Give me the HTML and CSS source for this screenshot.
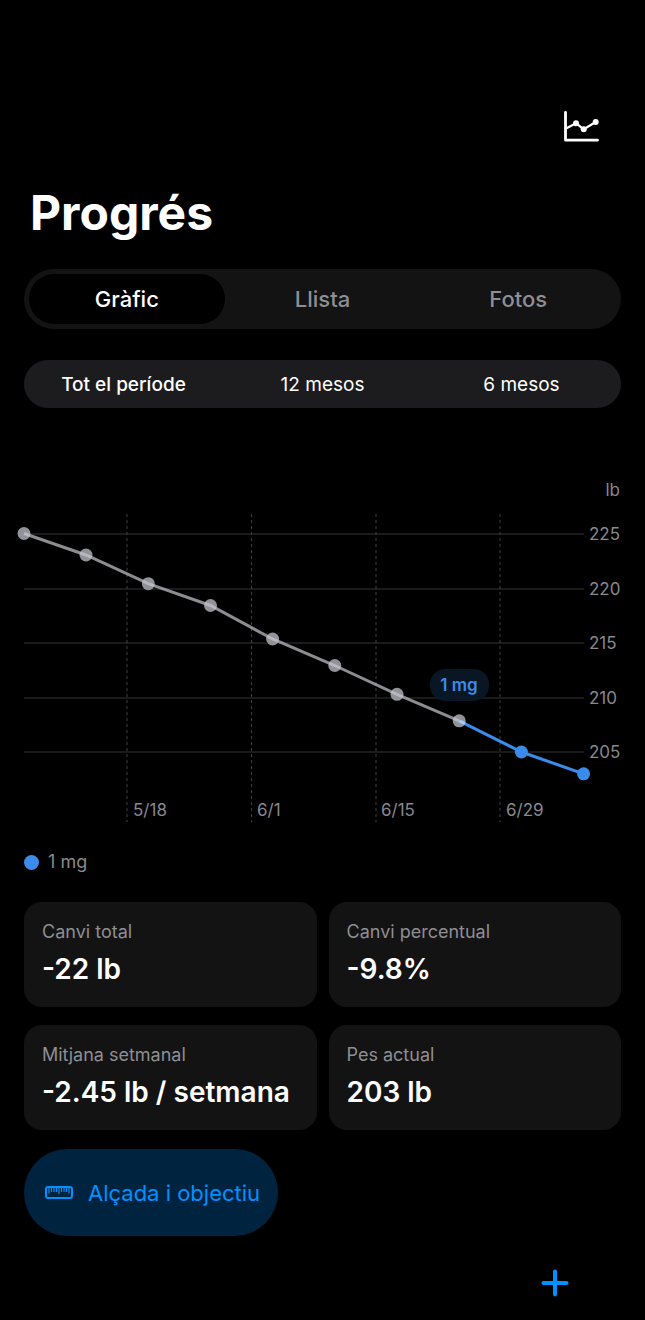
FILE: index.html
```html
<!DOCTYPE html>
<html lang="ca">
<head>
  <meta charset="utf-8">
  <meta name="viewport" content="width=device-width, initial-scale=1">
  <title>Progrés</title>
  <link rel="stylesheet" href="styles.css">
</head>
<body>

  <header class="topbar">
    <button class="icon-btn" type="button" aria-label="Gràfic">
      <svg width="38" height="34" viewBox="0 0 38 34" fill="none" stroke="#fff" stroke-linecap="round" stroke-linejoin="round">
        <path d="M2.5 2.5V30.2H34.5" stroke-width="2.8"/>
        <path d="M3 18.5L13 13.2L20.7 19.3L32.7 12" stroke-width="2.2"/>
        <g fill="#fff" stroke="none">
          <circle cx="13" cy="13.2" r="3"/>
          <circle cx="20.7" cy="19.3" r="3"/>
          <circle cx="32.7" cy="12" r="3"/>
        </g>
      </svg>
    </button>
  </header>

  <main>
    <h1>Progrés</h1>

    <nav class="tabs">
      <button class="tab active" type="button">Gràfic</button>
      <button class="tab" type="button">Llista</button>
      <button class="tab" type="button">Fotos</button>
    </nav>

    <div class="periods">
      <button class="period active" type="button">Tot el període</button>
      <button class="period" type="button">12 mesos</button>
      <button class="period" type="button">6 mesos</button>
    </div>

    <svg class="chart" viewBox="0 0 597 348">
      <g class="grid">
        <path d="M0 56H560M0 111H560M0 165H560M0 220H560M0 274H560"/>
        <path class="dashed" d="M103 36V344M227.5 36V344M352 36V344M476 36V344"/>
      </g>
      <g class="labels">
        <text x="596" y="18" text-anchor="end">lb</text>
        <text x="565" y="62">225</text>
        <text x="565" y="117">220</text>
        <text x="565" y="171">215</text>
        <text x="565" y="226">210</text>
        <text x="565" y="280">205</text>
        <text x="109" y="338">5/18</text>
        <text x="233" y="338">6/1</text>
        <text x="357" y="338">6/15</text>
        <text x="482" y="338">6/29</text>
      </g>
      <g class="dots">
        <circle cx="0" cy="55.5" r="6.5"/>
        <circle cx="62" cy="77" r="6.5"/>
        <circle cx="124.3" cy="105.7" r="6.5"/>
        <circle cx="186.5" cy="127.5" r="6.5"/>
        <circle cx="248.6" cy="161" r="6.5"/>
        <circle cx="310.8" cy="187.5" r="6.5"/>
        <circle cx="373" cy="216.3" r="6.5"/>
        <circle cx="435.2" cy="242.8" r="6.5"/>
      </g>
      <path class="line" d="M0 55.5L62 77L124.3 105.7L186.5 127.5L248.6 161L310.8 187.5L373 216.3L435.2 242.8"/>
      <path class="line dose" d="M435.2 242.8L497.4 274L559.6 295.8"/>
      <path class="overlap" d="M435.2 242.8L441 245.7"/>
      <g class="dots dose">
        <circle cx="497.4" cy="274" r="6.5"/>
        <circle cx="559.6" cy="295.8" r="6.5"/>
      </g>
      <rect class="tag" x="406" y="191" width="59" height="32" rx="15"/>
      <text class="tag-text" x="435" y="213" text-anchor="middle">1 mg</text>
    </svg>

    <div class="legend"><span class="legend-dot"></span>1 mg</div>

    <section class="cards">
      <div class="card">
        <div class="card-label">Canvi total</div>
        <div class="card-value">-22 lb</div>
      </div>
      <div class="card">
        <div class="card-label">Canvi percentual</div>
        <div class="card-value">-9.8%</div>
      </div>
      <div class="card">
        <div class="card-label">Mitjana setmanal</div>
        <div class="card-value">-2.45 lb / setmana</div>
      </div>
      <div class="card">
        <div class="card-label">Pes actual</div>
        <div class="card-value">203 lb</div>
      </div>
    </section>

    <button class="goal-btn" type="button">
      <svg width="28" height="14" viewBox="0 0 28 14" fill="none" stroke="#0091ff">
        <rect x="1" y="1" width="26" height="11" rx="2.2" stroke-width="2"/>
        <path d="M4 2V7.5M6.5 2V6M9 2V6M11.5 2V6M14 2V8M16.5 2V6M19 2V6M21.5 2V6M24 2V7.5" stroke-width="1.2"/>
      </svg>
      Alçada i objectiu
    </button>
  </main>

  <footer class="bottombar">
    <button class="icon-btn" type="button" aria-label="Afegeix">
      <svg width="28" height="28" viewBox="0 0 28 28" fill="none" stroke="#0091ff" stroke-width="4" stroke-linecap="round">
        <path d="M14 2.5V25.5M2.5 14H25.5"/>
      </svg>
    </button>
  </footer>

</body>
</html>
```
FILE: styles.css
```css
* {
  box-sizing: border-box;
}
body {
  margin: 0;
  padding: 110px 24px 0;
  background: #000;
  color: #fff;
  font-family: Inter, "Noto Sans", sans-serif;
}
button {
  border: 0;
  padding: 0;
  background: none;
  color: inherit;
  font: inherit;
  cursor: pointer;
}
svg {
  display: block;
}
.topbar {
  display: flex;
  justify-content: flex-end;
  padding-right: 20px;
}
h1 {
  margin: 39px 0 26px 6px;
  font-size: 48px;
  line-height: 60px;
  font-weight: 700;
}
.tabs {
  display: flex;
  height: 60px;
  padding: 5px;
  border-radius: 30px;
  background: #131313;
}
.tab {
  flex: 1;
  border-radius: 25px;
  color: #8e8e93;
  font-size: 22px;
  font-weight: 500;
}
.tab.active {
  background: #000;
  color: #fff;
}
.periods {
  display: flex;
  height: 48px;
  margin-top: 31px;
  border-radius: 24px;
  background: #1c1c1e;
}
.period {
  flex: 1;
  font-size: 19px;
}
.period.active {
  font-weight: 500;
}
.chart {
  width: 100%;
  height: auto;
  margin-top: 70px;
  overflow: visible;
}
.grid {
  fill: none;
  stroke: #353536;
  stroke-width: 1;
}
.dashed {
  stroke: #404042;
  stroke-dasharray: 3 3;
}
.labels {
  fill: #88888d;
  font-size: 17px;
}
.dots {
  fill: #929299;
}
.line {
  fill: none;
  stroke: #c8c8ce;
  stroke-opacity: 0.7;
  stroke-width: 3;
}
.dots.dose {
  fill: #3b8beb;
}
.line.dose {
  stroke: #3b8beb;
  stroke-opacity: 1;
}
.overlap {
  stroke: #a9cdf8;
  stroke-width: 3;
}
.tag {
  fill: #0a1929;
  fill-opacity: 0.9;
}
.tag-text {
  fill: #3b8beb;
  font-size: 17px;
  font-weight: 600;
}
.legend {
  display: flex;
  align-items: center;
  gap: 9px;
  margin-top: 24px;
  color: #88888d;
  font-size: 18px;
  line-height: 24px;
}
.legend-dot {
  width: 15px;
  height: 15px;
  border-radius: 50%;
  background: #3b8beb;
}
.cards {
  display: grid;
  grid-template-columns: repeat(2, minmax(0, 1fr));
  gap: 18px 12px;
  margin-top: 28px;
}
.card {
  padding: 18px;
  border-radius: 18px;
  background: #131313;
}
.card-label {
  color: #8e8e93;
  font-size: 18px;
  line-height: 24px;
}
.card-value {
  margin-top: 6px;
  font-size: 28px;
  line-height: 39px;
  font-weight: 600;
  white-space: nowrap;
}
.goal-btn {
  display: flex;
  align-items: center;
  gap: 15px;
  height: 87px;
  margin-top: 19px;
  padding: 0 18px 0 21px;
  border-radius: 44px;
  background: #00233f;
  color: #0091ff;
  font-size: 22px;
}
.bottombar {
  display: flex;
  justify-content: flex-end;
  padding: 33px 52px 9px 0;
}
```
